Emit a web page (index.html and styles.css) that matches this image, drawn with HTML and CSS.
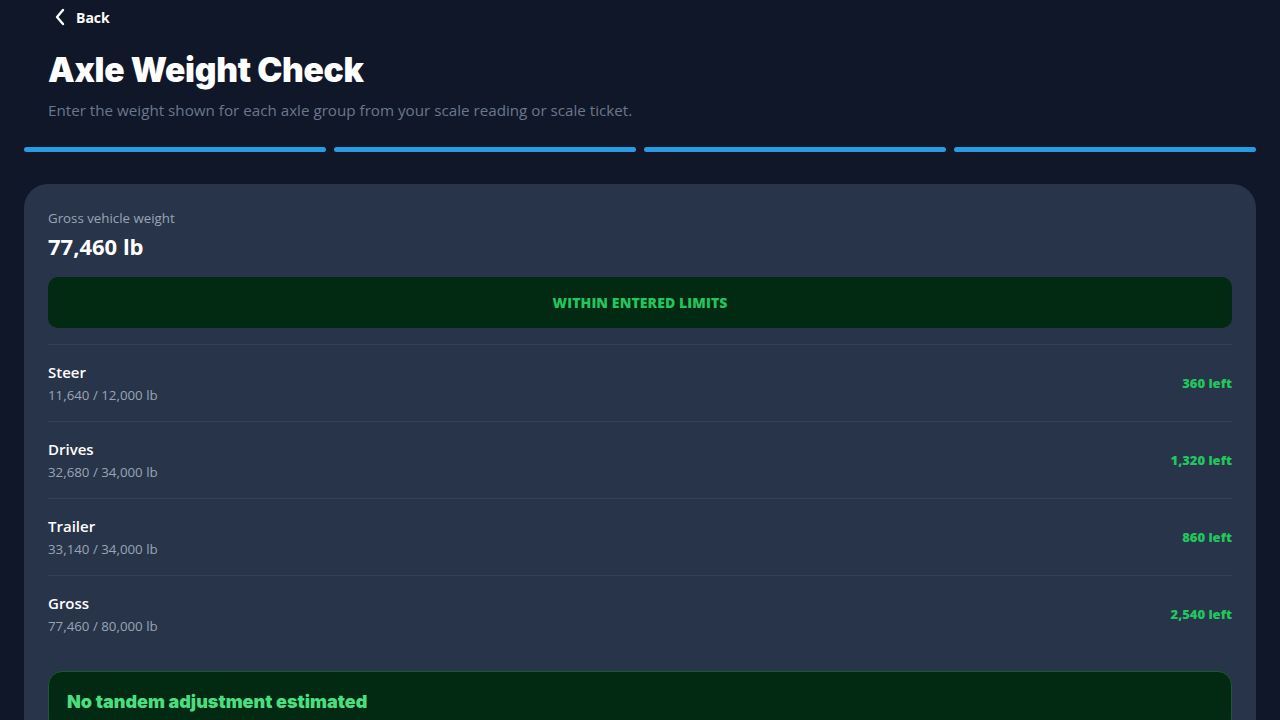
FILE: index.html
```html
<!DOCTYPE html>
<html lang="en">
<head>
    <meta charset="UTF-8">
    <meta name="viewport" content="width=device-width, initial-scale=1.0">
    <title>Axle Weight Check</title>
    <link rel="stylesheet" href="styles.css">
</head>
<body>
    <!-- header -->
    <header class="top">
        <a class="back" href="#">
            <svg width="12" height="18" viewBox="0 0 12 18"><path d="M9 2 L3 9 L9 16" fill="none" stroke="#fff" stroke-width="2.4" stroke-linecap="round" stroke-linejoin="round"/></svg>
            <span>Back</span>
        </a>
        <h1>Axle Weight Check</h1>
        <p class="sub">Enter the weight shown for each axle group from your scale reading or scale ticket.</p>
    </header>

    <!-- step progress -->
    <div class="steps">
        <span class="step"></span>
        <span class="step"></span>
        <span class="step"></span>
        <span class="step"></span>
    </div>

    <!-- results card -->
    <section class="card">
        <div class="gross-label">Gross vehicle weight</div>
        <div class="gross-value">77,460 lb</div>
        <div class="status">WITHIN ENTERED LIMITS</div>

        <div class="rows">
            <div class="row">
                <div>
                    <div class="row-name">Steer</div>
                    <div class="row-detail">11,640 / 12,000 lb</div>
                </div>
                <div class="row-left">360 left</div>
            </div>
            <div class="row">
                <div>
                    <div class="row-name">Drives</div>
                    <div class="row-detail">32,680 / 34,000 lb</div>
                </div>
                <div class="row-left">1,320 left</div>
            </div>
            <div class="row">
                <div>
                    <div class="row-name">Trailer</div>
                    <div class="row-detail">33,140 / 34,000 lb</div>
                </div>
                <div class="row-left">860 left</div>
            </div>
            <div class="row">
                <div>
                    <div class="row-name">Gross</div>
                    <div class="row-detail">77,460 / 80,000 lb</div>
                </div>
                <div class="row-left">2,540 left</div>
            </div>
        </div>

        <div class="tandem">
            <h2>No tandem adjustment estimated</h2>
        </div>
    </section>
</body>
</html>
```

FILE: styles.css
```css
body {
    font-family: "Open Sans", "Noto Sans", sans-serif;
    background-color: #0f1729;
    color: #fff;
    margin: 0;
    padding: 0 24px;
    overflow: hidden;
    height: 720px;
}

/* header */
.top {
    padding: 0 24px;
}

.back {
    display: inline-flex;
    align-items: center;
    gap: 10px;
    height: 34px;
    padding-left: 6px;
    color: #fff;
    text-decoration: none;
    font-weight: 700;
    font-size: 14px;
}

.top h1 {
    margin: 14px 0 0;
    font-family: Inter, "Open Sans", sans-serif;
    font-weight: 900;
    font-size: 33.6px;
    line-height: 44px;
    letter-spacing: -0.3px;
}

.sub {
    margin: 8px 0 0;
    color: #6b778c;
    font-size: 15.2px;
    line-height: 20px;
}

/* steps */
.steps {
    display: flex;
    gap: 8px;
    margin-top: 27px;
}

.step {
    flex: 1;
    height: 5px;
    border-radius: 3px;
    background: #2a9be0;
}

/* card */
.card {
    margin-top: 32px;
    background: #283449;
    border-radius: 24px;
    padding: 25px 24px 0;
    height: 560px;
}

.gross-label {
    color: #9aa4b6;
    font-size: 13.3px;
    line-height: 18px;
}

.gross-value {
    margin-top: 6px;
    font-weight: 700;
    font-size: 22px;
    line-height: 26px;
}

.status {
    margin-top: 18px;
    height: 51px;
    border-radius: 10px;
    background: #022912;
    color: #22c55e;
    font-weight: 800;
    font-size: 14px;
    letter-spacing: 0.1px;
    display: flex;
    align-items: center;
    justify-content: center;
}

.rows {
    margin-top: 16px;
    border-top: 1px solid #334058;
}

.row {
    display: flex;
    justify-content: space-between;
    align-items: center;
    height: 76px;
    border-bottom: 1px solid #334058;
}

.row:last-child {
    border-bottom: none;
}

.row-name {
    font-weight: 600;
    font-size: 15px;
    line-height: 20px;
}

.row-detail {
    margin-top: 4px;
    color: #9aa4b6;
    font-size: 13.3px;
    line-height: 18px;
}

.row-left {
    color: #22c55e;
    font-weight: 800;
    font-size: 13px;
}

.tandem {
    margin-top: 19px;
    background: #022912;
    border: 1px solid #1a5a32;
    border-radius: 14px;
    padding: 19px 18px;
}

.tandem h2 {
    margin: 0;
    font-family: Inter, "Open Sans", sans-serif;
    font-weight: 900;
    font-size: 18px;
    color: #4ade80;
}
```
